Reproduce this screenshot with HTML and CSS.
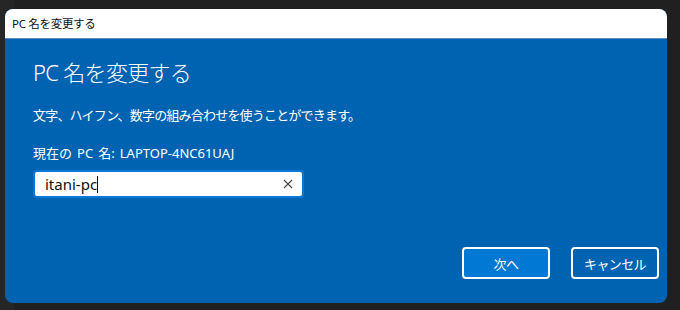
FILE: index.html
```html
<!DOCTYPE html>
<html lang="ja">
<head>
    <meta charset="UTF-8">
    <meta name="viewport" content="width=device-width, initial-scale=1.0">
    <title>PC 名を変更する</title>
    <link rel="stylesheet" href="styles.css">
</head>
<body>

<div class="desktop">
    <div class="dialog">
        <div class="title-bar">PC 名を変更する</div>
        <div class="dialog-body">
            <h1 class="heading">PC 名を変更する</h1>
            <p class="desc">文字、ハイフン、数字の組み合わせを使うことができます。</p>
            <p class="current">現在の PC 名: LAPTOP-4NC61UAJ</p>
            <div class="name-input">
                <span class="value">itani-pc</span><span class="caret"></span>
                <svg class="clear" width="10" height="10" viewBox="0 0 10 10">
                    <path d="M1 1 L9 9 M9 1 L1 9" stroke="#444" stroke-width="1.1" fill="none"/>
                </svg>
            </div>
            <div class="actions">
                <div class="btn primary">次へ</div>
                <div class="btn">キャンセル</div>
            </div>
        </div>
    </div>
</div>

</body>
</html>
```

FILE: styles.css
```css
body {
    margin: 0;
    background: #202020;
    font-family: "Noto Sans", "Noto Sans CJK JP", sans-serif;
    overflow: hidden;
}
.desktop {
    width: 680px;
    height: 310px;
    padding: 9px 0 0 5px;
    box-sizing: border-box;
    background: linear-gradient(to right, #262626 0, #262626 14px, #202020 14px);
}
.dialog {
    width: 662px;
    height: 294px;
    border-radius: 8px;
    overflow: hidden;
    display: flex;
    flex-direction: column;
    background: #0063b1;
}
.title-bar {
    height: 29px;
    background: #fff;
    border-bottom: 1px solid #5a8fc4;
    font-size: 11.5px;
    letter-spacing: -0.3px;
    line-height: 29px;
    padding-left: 7px;
    color: #111;
}
.dialog-body {
    flex: 1;
    display: flex;
    flex-direction: column;
    padding: 17px 8px 24px 28px;
    color: #fff;
}
.heading {
    margin: 0;
    font-size: 22px;
    font-weight: 300;
    letter-spacing: -0.7px;
    line-height: 32px;
}
.desc {
    margin: 17px 0 0;
    font-size: 13px;
    letter-spacing: -0.8px;
    line-height: 20px;
}
.current {
    margin: 18px 0 0;
    font-size: 13px;
    word-spacing: 1.7px;
    line-height: 20px;
}
.name-input {
    margin-top: 7px;
    width: 271px;
    height: 28px;
    box-sizing: border-box;
    background: #fff;
    border: 2px solid #0a78d6;
    border-radius: 4px;
    display: flex;
    align-items: center;
    padding: 0 9px 0 10px;
    color: #111;
    font-size: 15px;
}
.caret {
    width: 1px;
    height: 17px;
    background: #111;
}
.clear {
    margin-left: auto;
}
.actions {
    margin-top: auto;
    display: flex;
    justify-content: flex-end;
    gap: 21px;
}
.btn {
    width: 88px;
    height: 32px;
    box-sizing: border-box;
    border: 2px solid #fff;
    border-radius: 4px;
    display: flex;
    align-items: center;
    justify-content: center;
    font-size: 13px;
    letter-spacing: -0.6px;
    color: #fff;
}
.btn.primary {
    background: #0078d4;
}
```
